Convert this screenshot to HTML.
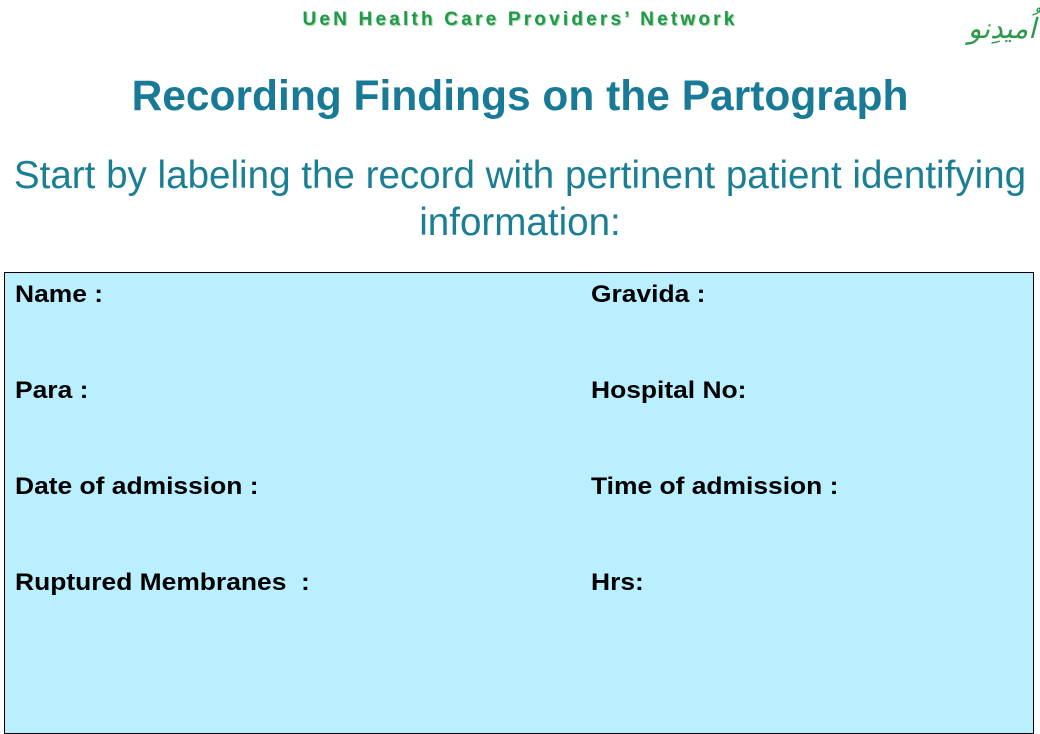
<!DOCTYPE html>
<html><head><style>
body{margin:0;width:1040px;height:720px;background:#fff;position:relative;overflow:hidden;font-family:"Liberation Sans",sans-serif}
.hdr{position:absolute;left:0;width:1040px;top:9px;text-align:center;color:#1f9a4a;font-weight:bold;font-size:19px;letter-spacing:3.2px;text-shadow:1px 1px 1px #9c9;}
.logo{position:absolute;right:4px;top:12px;color:#2a9a4a;font-size:28px;font-family:"DejaVu Sans",serif;font-style:italic}
h1{position:absolute;left:0;width:1040px;top:73px;margin:0;text-align:center;color:#187a96;font-size:42.5px;font-weight:bold}
.sub{position:absolute;left:0;width:1040px;top:152px;text-align:center;color:#1a7f95;font-size:38.6px;line-height:47px}
.box{position:absolute;left:4px;top:272px;width:1028px;height:460px;background:#b9efff;border:1px solid #000}
.l{position:absolute;font-weight:bold;font-size:24px;color:#000;transform:scaleX(1.1);transform-origin:0 0}
</style></head><body>
<div class="hdr">UeN Health Care Providers’ Network</div>
<div class="logo">اُمیدِنو</div>
<h1>Recording Findings on the Partograph</h1>
<div class="sub">Start by labeling the record with pertinent patient identifying<br>information:</div>
<div class="box"></div>
<div class="l" style="left:15px;top:281px">Name :</div>
<div class="l" style="left:591px;top:281px">Gravida :</div>
<div class="l" style="left:15px;top:377px">Para :</div>
<div class="l" style="left:591px;top:377px">Hospital No:</div>
<div class="l" style="left:15px;top:473px">Date of admission :</div>
<div class="l" style="left:591px;top:473px">Time of admission :</div>
<div class="l" style="left:15px;top:569px">Ruptured Membranes&nbsp; :</div>
<div class="l" style="left:591px;top:569px">Hrs:</div>
</body></html>
